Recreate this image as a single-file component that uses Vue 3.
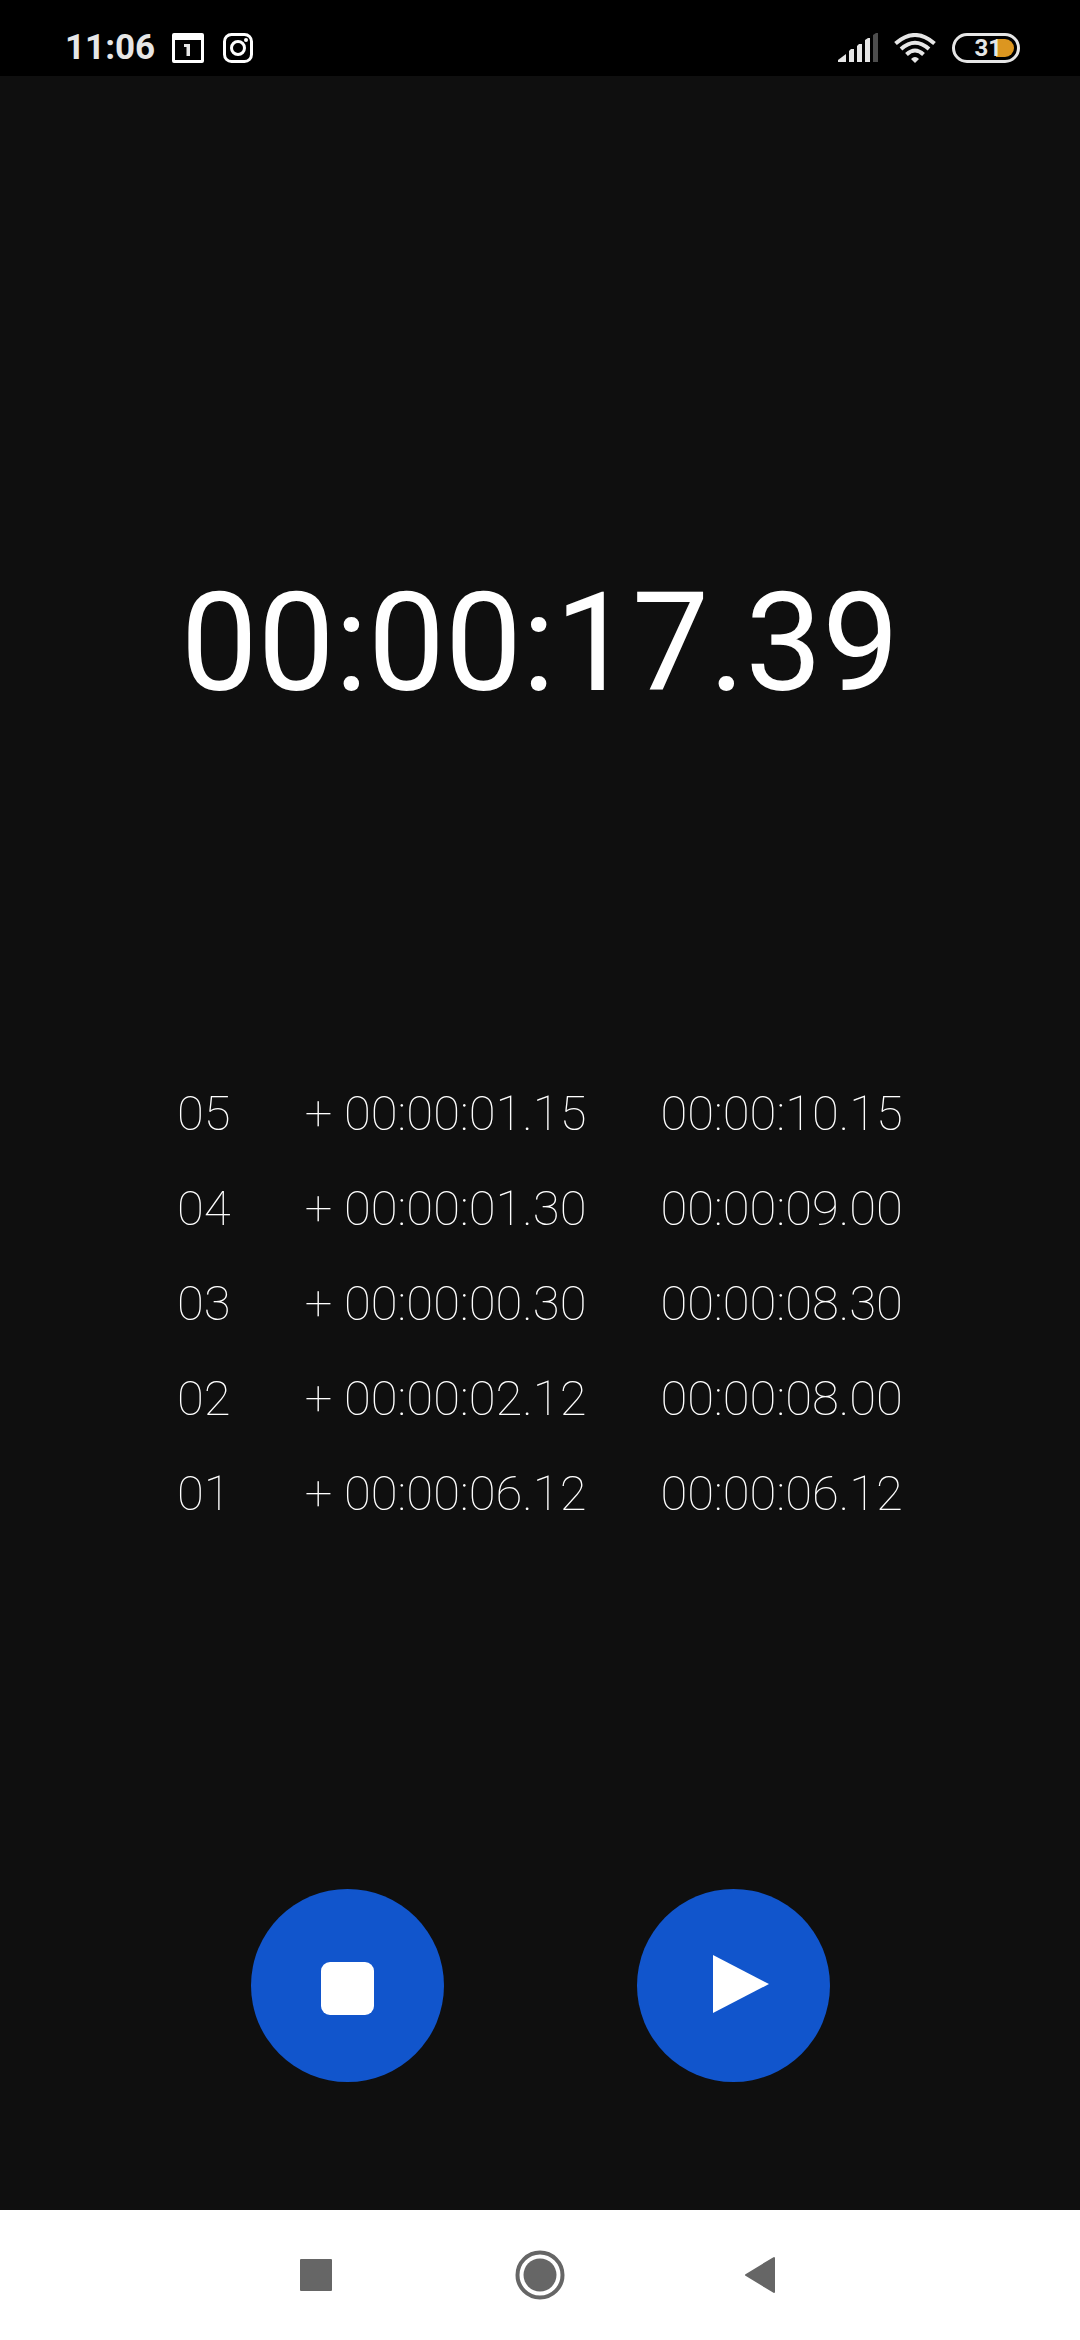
<script setup>
const laps = [
  { no: '05', split: '+ 00:00:01.15', total: '00:00:10.15' },
  { no: '04', split: '+ 00:00:01.30', total: '00:00:09.00' },
  { no: '03', split: '+ 00:00:00.30', total: '00:00:08.30' },
  { no: '02', split: '+ 00:00:02.12', total: '00:00:08.00' },
  { no: '01', split: '+ 00:00:06.12', total: '00:00:06.12' },
]
</script>

<template>
  <div class="screen">
    <header class="status">
      <div class="status-group">
        <time class="clock">11:06</time>
        <svg class="calendar" width="32" height="30" viewBox="0 0 32 30" aria-hidden="true">
          <path fill="#fff" fill-rule="evenodd" d="M2 0H30Q32 0 32 2V28Q32 30 30 30H2Q0 30 0 28V2Q0 0 2 0ZM3 7V27H29V7Z" />
          <path fill="#e6e6e6" d="M12 11H18V23H14.500V14H12Z" />
        </svg>
        <svg class="camera" width="30" height="30" viewBox="0 0 30 30" fill="none" stroke="#fff" aria-hidden="true">
          <rect x="1.500" y="1.500" width="27" height="27" rx="7" stroke-width="3" />
          <circle cx="15" cy="15" r="6.500" stroke-width="3" />
          <circle cx="23" cy="7" r="2" fill="#fff" stroke="none" />
        </svg>
      </div>
      <div class="status-group">
        <svg class="signal" width="40" height="30" viewBox="0 0 40 30" fill="#e6e6e6" aria-hidden="true">
          <path d="M0 29V27L8 21V29Z" />
          <path d="M11 29V18L13 16H16V29Z" />
          <path d="M19 29V13L21 11H24V29Z" />
          <path d="M27 29V7L30 5H32V29Z" />
          <path fill="#4d4d4d" d="M35 29V2L38 0H40V29Z" />
        </svg>
        <svg class="wifi" width="42" height="30" viewBox="0 0 42 30" fill="none" stroke="#e6e6e6" stroke-width="4" aria-hidden="true">
          <path d="M1.500 10.500Q21 -6.500 40.500 10.500" />
          <path d="M7 16Q21 3.500 35 16" />
          <path d="M12.500 21.500Q21 13.500 29.500 21.500" />
          <path fill="#e6e6e6" stroke="none" d="M17 26Q21 22 25 26L21 30Z" />
        </svg>
        <div class="battery"><i class="charge"></i><span class="level">31</span></div>
      </div>
    </header>

    <main class="stopwatch">
      <div class="elapsed" role="timer">00:00:17.39</div>

      <table class="laps">
        <tbody>
          <tr v-for="lap in laps" :key="lap.no">
            <td>{{ lap.no }}</td>
            <td>{{ lap.split }}</td>
            <td>{{ lap.total }}</td>
          </tr>
        </tbody>
      </table>

      <div class="controls">
        <button class="round" type="button" aria-label="Stop">
          <svg viewBox="0 0 193 193" aria-hidden="true">
            <rect x="70" y="73" width="53" height="53" rx="9" fill="#fff" />
          </svg>
        </button>
        <button class="round" type="button" aria-label="Start">
          <svg viewBox="0 0 193 193" aria-hidden="true">
            <path d="M76 66L132 95L76 124Z" fill="#fff" />
          </svg>
        </button>
      </div>
    </main>

    <nav class="navbar">
      <button type="button" aria-label="Recent apps">
        <svg width="50" height="50" viewBox="0 0 50 50" aria-hidden="true">
          <rect x="9" y="9" width="32" height="32" rx="1" fill="#666" />
        </svg>
      </button>
      <button type="button" aria-label="Home">
        <svg width="50" height="50" viewBox="0 0 50 50" aria-hidden="true">
          <circle cx="25" cy="25" r="22.500" fill="none" stroke="#666" stroke-width="4" />
          <circle cx="25" cy="25" r="16.500" fill="#666" />
        </svg>
      </button>
      <button type="button" aria-label="Back">
        <svg width="50" height="50" viewBox="0 0 50 50" aria-hidden="true">
          <path d="M7 25L35 8V42Z" fill="#666" stroke="#666" stroke-width="2" stroke-linejoin="round" />
        </svg>
      </button>
    </nav>
  </div>
</template>

<style>
body {
  margin: 0;
  background: #0f0f0f;
}
</style>

<style scoped>
.screen {
  display: flex;
  flex-direction: column;
  min-height: 100vh;
  background: #0f0f0f;
  color: #fff;
  font-family: Roboto, "Noto Sans", sans-serif;
}

.status {
  display: flex;
  justify-content: space-between;
  box-sizing: border-box;
  height: 76px;
  padding: 20px 60px 0 65px;
  background: #000;
}

.status-group {
  display: flex;
  align-items: center;
  height: 56px;
}

.clock {
  font-size: 35px;
  font-weight: 700;
  line-height: 56px;
  color: #e6e6e6;
}

.calendar {
  margin-left: 17px;
}

.camera {
  margin-left: 19px;
}

.wifi {
  margin: 0 16px;
}

.battery {
  position: relative;
  display: flex;
  align-items: center;
  justify-content: flex-end;
  box-sizing: border-box;
  width: 68px;
  height: 30px;
  padding-right: 15px;
  border: 3px solid #e6e6e6;
  border-radius: 15px;
  font-size: 24px;
  font-weight: 700;
  line-height: 24px;
  color: #e6e6e6;
}

.level {
  z-index: 1;
}

.charge {
  position: absolute;
  top: 3px;
  right: 3px;
  width: 18px;
  height: 18px;
  border-radius: 0 9px 9px 0;
  background: #dc9620;
}

.stopwatch {
  display: flex;
  flex: 1;
  flex-direction: column;
  align-items: center;
  padding: 487px 0 128px;
}

.elapsed {
  font-size: 137px;
  line-height: 160px;
}

.laps {
  margin-top: 343px;
  border-collapse: collapse;
  font-size: 49px;
  font-weight: 100;
  line-height: 95px;
  white-space: nowrap;
}

.laps td {
  padding: 0 74px 0 0;
}

.laps td:last-child {
  padding-right: 0;
}

.controls {
  display: flex;
  gap: 193px;
  margin-top: auto;
}

.round {
  width: 193px;
  height: 193px;
  padding: 0;
  border: 0;
  border-radius: 50%;
  background: #1155cc;
}

.round svg {
  display: block;
  width: 100%;
  height: 100%;
}

.navbar {
  display: flex;
  align-items: center;
  justify-content: center;
  gap: 174px;
  height: 130px;
  background: #fff;
}

.navbar button {
  padding: 0;
  border: 0;
  background: none;
}

.navbar svg {
  display: block;
}
</style>
